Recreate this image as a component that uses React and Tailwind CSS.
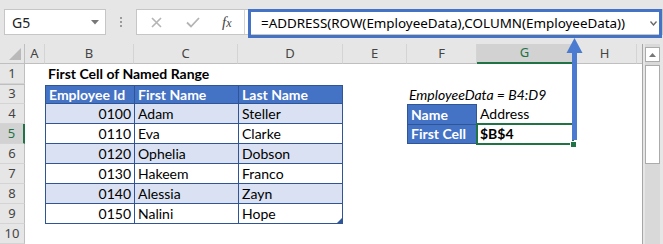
import React from 'react';

const cell = "font-['Lato',sans-serif] text-[14px] leading-none flex items-center whitespace-nowrap";
const tb = 'border-[#2f5597]';

const employees = [
  { id: '0100', first: 'Adam', last: 'Steller' },
  { id: '0110', first: 'Eva', last: 'Clarke' },
  { id: '0120', first: 'Ophelia', last: 'Dobson' },
  { id: '0130', first: 'Hakeem', last: 'Franco' },
  { id: '0140', first: 'Alessia', last: 'Zayn' },
  { id: '0150', first: 'Nalini', last: 'Hope' },
];

const RowHead = ({ n, active }) => (
  <div
    className={`w-[25px] shrink-0 flex items-center justify-center border-b border-b-[#d4d4d4] font-['Noto_Sans',sans-serif] text-[13px] ${
      active
        ? 'bg-[#d2d2d2] text-[#217346] border-r-2 border-r-[#217346]'
        : 'bg-[#e6e6e6] text-[#444] border-r border-r-[#bfbfbf]'
    }`}
  >
    {n}
  </div>
);

const ColHead = ({ w, label, active }) => (
  <div
    className={`${w} shrink-0 flex items-center justify-center font-['Noto_Sans',sans-serif] text-[13px] border-r border-r-[#d4d4d4] ${
      active
        ? 'bg-[#d2d2d2] text-[#217346] border-b-2 border-b-[#217346]'
        : 'bg-[#e6e6e6] text-[#444] border-b border-b-[#bfbfbf]'
    }`}
  >
    {label}
  </div>
);

export default function App() {
  return (
    <div className="relative w-[663px] h-[244px] overflow-hidden bg-white">
      {/* Formula bar */}
      <div className="h-[44px] bg-[#e6e6e6] flex items-start pt-[9px]">
        <div className="ml-[4px] w-[102px] h-[26px] shrink-0 bg-white border border-[#c6c6c6] flex items-center justify-between pl-[7px] pr-[6px]">
          <span className="font-['Noto_Sans',sans-serif] text-[14px] text-[#222]">G5</span>
          <svg width="8" height="5" viewBox="0 0 8 5">
            <path d="M0 0 H8 L4 4.5 Z" fill="#777" />
          </svg>
        </div>
        <div className="w-[30px] shrink-0 flex flex-col items-center gap-[2px] pt-[8px]">
          <span className="w-[2px] h-[2px] bg-[#9a9a9a]" />
          <span className="w-[2px] h-[2px] bg-[#9a9a9a]" />
          <span className="w-[2px] h-[2px] bg-[#9a9a9a]" />
        </div>
        <div className="flex-1 h-[26px] bg-white border border-[#c6c6c6] flex items-start">
          <div className="w-[108px] h-full shrink-0 flex items-center border-r border-[#d4d4d4]">
            <svg className="ml-[14px]" width="11" height="11" viewBox="0 0 11 11">
              <path d="M1 1 L10 10 M10 1 L1 10" stroke="#b4b4b4" strokeWidth="1.6" />
            </svg>
            <svg className="ml-[24px]" width="14" height="11" viewBox="0 0 14 11">
              <path d="M1 5.5 L5 9.5 L13 1" stroke="#b4b4b4" strokeWidth="1.8" fill="none" />
            </svg>
            <span className="ml-[22px] font-['Liberation_Serif',serif] italic text-[15px] text-[#444]">
              f<span className="text-[12px]">x</span>
            </span>
          </div>
          <div className="ml-[3px] -mt-[1px] flex-1 h-[29px] border-[3px] border-[#4472c4] flex items-center justify-between pl-[10px] pr-[2px]">
            <span className="font-['Noto_Sans',sans-serif] text-[13.4px] text-black whitespace-nowrap">
              =ADDRESS(ROW(EmployeeData),COLUMN(EmployeeData))
            </span>
            <svg width="7" height="5" viewBox="0 0 7 5">
              <path d="M0.5 0.5 L3.5 4 L6.5 0.5" stroke="#666" strokeWidth="1.3" fill="none" />
            </svg>
          </div>
        </div>
      </div>

      {/* Sheet */}
      <div className="flex">
        <div className="w-[642px] shrink-0">
          {/* Column headers */}
          <div className="flex h-[20px]">
            <div className="w-[25px] shrink-0 bg-[#e6e6e6] border-r border-b border-[#bfbfbf] flex items-end justify-end pr-[3px] pb-[3px]">
              <svg width="12" height="12" viewBox="0 0 12 12">
                <path d="M12 0 V12 H0 Z" fill="#b9b9b9" />
              </svg>
            </div>
            <ColHead w="w-[20px]" label="A" />
            <ColHead w="w-[89px]" label="B" />
            <ColHead w="w-[104px]" label="C" />
            <ColHead w="w-[105px]" label="D" />
            <ColHead w="w-[64px]" label="E" />
            <ColHead w="w-[70px]" label="F" />
            <ColHead w="w-[96px]" label="G" active />
            <ColHead w="w-[64px]" label="H" />
            <div className="w-[5px] shrink-0 bg-[#e6e6e6] border-b border-[#bfbfbf]" />
          </div>

          {/* Row 1 */}
          <div className="flex h-[20px]">
            <RowHead n={1} />
            <div className="w-[20px] shrink-0" />
            <div className={`${cell} pl-[3px] font-bold text-black`}>First Cell of Named Range</div>
          </div>
          {/* Hidden row 2 */}
          <div className="flex h-[1px]">
            <div className="w-[25px] shrink-0 bg-[#bfbfbf]" />
          </div>

          {/* Row 3 */}
          <div className="flex h-[19px]">
            <RowHead n={3} />
            <div className="w-[20px] shrink-0" />
            <div className={`${cell} w-[89px] shrink-0 bg-[#4472c4] border-l border-t border-b ${tb} pl-[3px] font-bold text-white`}>Employee Id</div>
            <div className={`${cell} w-[104px] shrink-0 bg-[#4472c4] border-l border-t border-b ${tb} pl-[3px] font-bold text-white`}>First Name</div>
            <div className={`${cell} w-[105px] shrink-0 bg-[#4472c4] border-l border-r border-t border-b ${tb} pl-[3px] font-bold text-white`}>Last Name</div>
            <div className="w-[64px] shrink-0" />
            <div className={`${cell} pl-[2px] italic text-black`}>EmployeeData = B4:D9</div>
          </div>

          {/* Rows 4-9 */}
          {employees.map((e, i) => {
            const n = i + 4;
            const band = i % 2 === 0 ? 'bg-[#d9e1f2]' : 'bg-white';
            return (
              <div key={e.id} className="flex h-[20px]">
                <RowHead n={n} active={n === 5} />
                <div className="w-[20px] shrink-0" />
                <div className={`${cell} ${band} w-[89px] shrink-0 border-l border-b ${tb} justify-end pr-[3px] text-black`}>{e.id}</div>
                <div className={`${cell} ${band} w-[104px] shrink-0 border-l border-b ${tb} pl-[3px] text-black`}>{e.first}</div>
                <div className={`${cell} ${band} relative w-[105px] shrink-0 border-l border-r border-b ${tb} pl-[3px] text-black`}>
                  {e.last}
                  {n === 9 && (
                    <svg className="absolute right-0 bottom-0" width="5" height="5" viewBox="0 0 5 5">
                      <path d="M5 0 V5 H0 Z" fill="#2f5597" />
                    </svg>
                  )}
                </div>
                <div className="w-[64px] shrink-0" />
                {n === 4 && (
                  <>
                    <div className={`${cell} w-[70px] shrink-0 bg-[#4472c4] border border-b-0 ${tb} pl-[3px] font-bold text-white`}>Name</div>
                    <div className={`${cell} w-[96px] shrink-0 pl-[3px] text-black`}>Address</div>
                  </>
                )}
                {n === 5 && (
                  <>
                    <div className={`${cell} w-[70px] shrink-0 bg-[#4472c4] border ${tb} pl-[3px] font-bold text-white`}>First Cell</div>
                    <div className={`${cell} relative w-[96px] shrink-0 pl-[3px] font-bold text-black`}>
                      $B$4
                      <div className="absolute -left-[1px] -top-[1px] -right-[1px] -bottom-[1px] border-2 border-[#217346]" />
                      <div className="absolute -right-[4px] -bottom-[4px] w-[7px] h-[7px] bg-[#217346] border border-white" />
                    </div>
                  </>
                )}
              </div>
            );
          })}

          {/* Row 10 */}
          <div className="flex h-[20px]">
            <RowHead n={10} />
          </div>
        </div>

        {/* Vertical scrollbar */}
        <div className="w-[21px] h-[200px] shrink-0 bg-[#e6e6e6] border-l border-[#a6a6a6] pl-[2px]">
          <div className="w-[15px] h-full bg-[#d9d9d9] flex flex-col">
            <div className="mt-[3px] h-[15px] bg-white border border-[#ababab] flex items-center justify-center">
              <svg width="7" height="4" viewBox="0 0 7 4">
                <path d="M0 4 L3.5 0 L7 4 Z" fill="#777" />
              </svg>
            </div>
            <div className="mt-[3px] h-[99px] bg-white border border-[#ababab]" />
          </div>
        </div>
      </div>

      {/* Annotation arrow */}
      <svg className="absolute left-[566px] top-[37px]" width="17" height="104" viewBox="0 0 17 104">
        <path d="M8.5 1 L16.5 16 H0.5 Z" fill="#4a7bd0" />
        <rect x="6" y="15" width="5" height="88" fill="#4a7bd0" />
      </svg>
    </div>
  );
}
